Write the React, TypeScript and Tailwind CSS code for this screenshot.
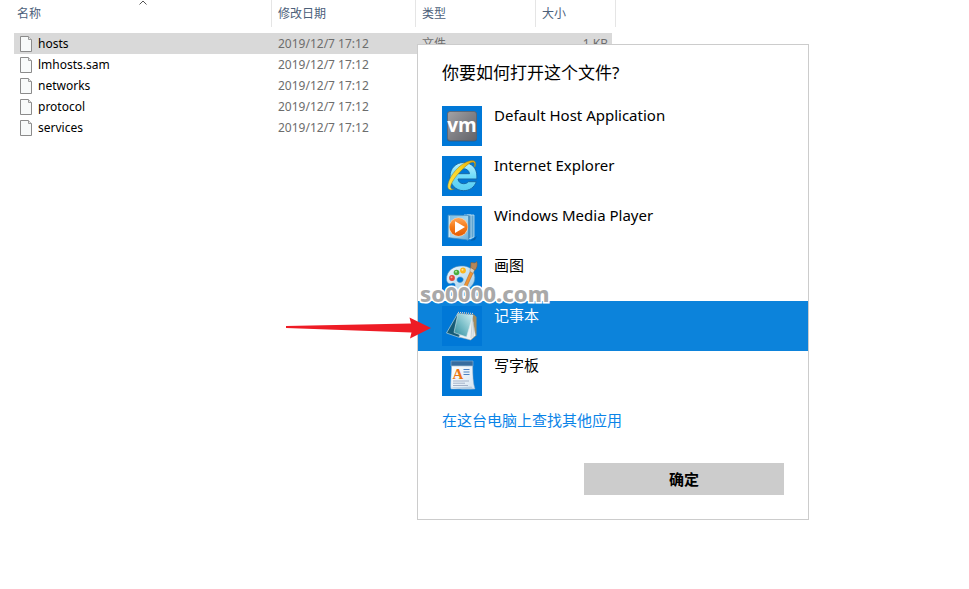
import type { ReactNode } from "react";
import { clsx } from "clsx";

type FileRow = { name: string; modified: string; type?: string; size?: string };

const files: FileRow[] = [
  { name: "hosts", modified: "2019/12/7 17:12", type: "文件", size: "1 KB" },
  { name: "lmhosts.sam", modified: "2019/12/7 17:12" },
  { name: "networks", modified: "2019/12/7 17:12" },
  { name: "protocol", modified: "2019/12/7 17:12" },
  { name: "services", modified: "2019/12/7 17:12" },
];

function FileIcon() {
  return (
    <svg className="h-4 w-3 shrink-0" viewBox="0 0 12 16" fill="none" aria-hidden="true">
      <path d="M.5.5h8l3 3v12H.5z" fill="#f8fafa" stroke="#8b8b8b" />
      <path d="M8.5.5v3h3" fill="#e6e6e6" stroke="#9a9a9a" />
    </svg>
  );
}

function VmIcon() {
  return (
    <svg viewBox="0 0 40 40" className="h-10 w-10" aria-hidden="true">
      <defs>
        <linearGradient id="vm-body" x1="0" y1="0" x2="1" y2="1">
          <stop offset="0" stopColor="#a3a3a6" />
          <stop offset=".5" stopColor="#808085" />
          <stop offset="1" stopColor="#626268" />
        </linearGradient>
      </defs>
      <rect x="5" y="5.5" width="30" height="30" rx="3" fill="#2b5c8e" />
      <rect x="5.500" y="5.500" width="29" height="29" rx="2.500" fill="url(#vm-body)" stroke="#5d6570" strokeWidth=".8" />
      <text x="20" y="26" textAnchor="middle" fontSize="19" fontWeight="700" fill="#fff" fontFamily="Open Sans, sans-serif">
        vm
      </text>
    </svg>
  );
}

function ExplorerIcon() {
  return (
    <svg viewBox="0 0 40 40" className="h-10 w-10" fill="none" aria-hidden="true">
      <defs>
        <linearGradient id="ie-body" x1="0" y1="0" x2="0" y2="1">
          <stop offset="0" stopColor="#b9f1fd" />
          <stop offset=".5" stopColor="#6fdcf9" />
          <stop offset="1" stopColor="#58cdf3" />
        </linearGradient>
        <linearGradient id="ie-ring" x1="0" y1="1" x2="1" y2="0">
          <stop offset="0" stopColor="#ffe04a" />
          <stop offset=".6" stopColor="#fbd21c" />
          <stop offset="1" stopColor="#e5a20a" />
        </linearGradient>
      </defs>
      <path
        d="M21.500 6.500c8 0 13.400 5.700 13.400 13.500v3H16c.4 3 2.600 4.700 5.600 4.700 2.200 0 3.800-.8 4.900-2h7.800c-1.900 5.700-6.700 9-12.700 9C13.700 34.700 8 28.700 8 20.500 8 12.200 14 6.500 21.500 6.500zM16 17.700h11.500c-.5-3-2.700-4.900-5.700-4.900-3.100 0-5.200 1.900-5.800 4.900z"
        fill="url(#ie-body)"
        stroke="#1669a8"
        strokeWidth="1"
        fillRule="evenodd"
      />
      <path
        d="M33.200 10.800c.8-2.600.7-4.600-.4-5.600-3.100-2.700-12.600 1.500-19.300 9.200S4 30.900 6.900 33.300c1.300 1 3.300.7 5.600-.5-1.600.4-2.700.3-3.300-.3-2.100-2 2-9.300 8.300-16.100S29.600 4.800 31.800 6.600c.9.700 1 2.200.3 4.200z"
        fill="url(#ie-ring)"
        stroke="#7c7a33"
        strokeWidth=".5"
      />
    </svg>
  );
}

function MediaPlayerIcon() {
  return (
    <svg viewBox="0 0 40 40" className="h-10 w-10" aria-hidden="true">
      <defs>
        <linearGradient id="wmp-disc" x1="0" y1="0" x2="0" y2="1">
          <stop offset="0" stopColor="#ffa557" />
          <stop offset=".5" stopColor="#f57a17" />
          <stop offset="1" stopColor="#e45c05" />
        </linearGradient>
        <linearGradient id="wmp-case" x1="0" y1="0" x2="1" y2="1">
          <stop offset="0" stopColor="#76bce6" />
          <stop offset=".55" stopColor="#a7d7ef" />
          <stop offset="1" stopColor="#6daed7" />
        </linearGradient>
      </defs>
      <path d="M28 35l7-5-2 4z" fill="#07508f" opacity=".6" />
      <path d="M25 9h7v22l-4 2z" fill="#5fa5d1" stroke="#c0e2f4" strokeWidth=".8" />
      <path d="M22 9h7v23l-4 2z" fill="#4a91c2" stroke="#c0e2f4" strokeWidth=".8" />
      <path d="M6 9l20.500.5V34L6 31.500z" fill="url(#wmp-case)" stroke="#438bbd" strokeWidth=".7" />
      <path d="M7.500 10v21" stroke="#d0eaf6" strokeWidth=".8" />
      <circle cx="16.500" cy="21" r="9.500" fill="#ffd1a5" />
      <circle cx="16.500" cy="21" r="9" fill="url(#wmp-disc)" />
      <path d="M13 15.300L23 21l-10 6z" fill="#fff" />
    </svg>
  );
}

function PaintIcon() {
  return (
    <svg viewBox="0 0 40 40" className="h-10 w-10" aria-hidden="true">
      <defs>
        <linearGradient id="palette" x1="0" y1="0" x2="1" y2="1">
          <stop offset="0" stopColor="#f3f9fd" />
          <stop offset="1" stopColor="#9bcbe9" />
        </linearGradient>
      </defs>
      <path
        d="M22 10C11.500 9 4.500 15 4.500 23c0 3.500 2.500 5.500 5 4.500 3-1.200 4 .5 3.500 3-.5 3 2 5 7 4.500 8-1 13-7 12.800-13.500C32.600 15 28.500 10.700 22 10zm-4 11c2 0 3.200 1 3.200 2.600S19.800 26.500 18 26.500s-3-1.200-3-2.700S16.200 21 18 21z"
        fill="url(#palette)"
        stroke="#4e8fba"
        strokeWidth=".6"
        fillRule="evenodd"
      />
      <circle cx="10" cy="22" r="2.900" fill="#e0483e" />
      <circle cx="14.500" cy="16.500" r="2.800" fill="#4caf3d" />
      <circle cx="21" cy="14.500" r="2.900" fill="#fbb51c" />
      <circle cx="9.500" cy="21.300" r="1" fill="#f7a49d" />
      <circle cx="14" cy="15.800" r="1" fill="#b4e3a8" />
      <circle cx="20.500" cy="13.800" r="1" fill="#ffe39a" />
      <path d="M28.500 15l2.800 1.700-7.300 15.800-3 2.500.5-4z" fill="#ee9434" stroke="#b9641a" strokeWidth=".5" />
      <path d="M28.800 11l4 2.600-1.700 3.700-3.300-2z" fill="#d9d2c4" stroke="#8a7a60" strokeWidth=".4" />
      <path d="M28.500 11.500c.7-2 0-4 .5-5l4 .5 1.800-1.500c1 3.500.2 6.500-1.800 8.700z" fill="#b5875a" stroke="#80582f" strokeWidth=".5" />
    </svg>
  );
}

function NotepadIcon() {
  return (
    <svg viewBox="0 0 40 40" className="h-10 w-10" aria-hidden="true">
      <defs>
        <linearGradient id="note-cover" x1="0" y1="1" x2="1" y2="0">
          <stop offset="0" stopColor="#2d8a9b" />
          <stop offset=".5" stopColor="#7dc0ca" />
          <stop offset="1" stopColor="#d8f3f6" />
        </linearGradient>
      </defs>
      <path d="M31.500 8l3 3v18.500L29 34l-3-1z" fill="#a38b5c" />
      <path d="M16 7L4.500 27l13 4.500z" fill="#155b76" stroke="#bad6dc" strokeWidth=".7" />
      <path d="M30 9l3.500 20.500-5 4.500L17 31z" fill="#eef3f4" stroke="#a4b0b2" strokeWidth=".5" />
      <path d="M30.500 12L29 32M31.500 16l-.5 15" stroke="#a9b8bd" strokeWidth=".6" />
      <path d="M16 7.500l15 1.500-6.500 22-12.500-4.500z" fill="url(#note-cover)" stroke="#d5eaee" strokeWidth=".6" />
      <path d="M16 7l15.500 1.200" stroke="#8a9496" strokeWidth="1.600" strokeDasharray="1 1" />
      <path d="M16 6.300l15.500 1.200" stroke="#d8dbd9" strokeWidth="1" strokeDasharray="1 1" />
    </svg>
  );
}

function WordpadIcon() {
  return (
    <svg viewBox="0 0 40 40" className="h-10 w-10" aria-hidden="true">
      <defs>
        <linearGradient id="word-page" x1="0" y1="0" x2="1" y2="1">
          <stop offset="0" stopColor="#fff" />
          <stop offset="1" stopColor="#d5e4f1" />
        </linearGradient>
      </defs>
      <path d="M9 5h22v5H9z" fill="#386c9e" stroke="#7fa9cf" strokeWidth=".7" />
      <path d="M9.500 10h21.200c0 9 .3 17 2.300 23H9c-1-3 .5-16 .5-23z" fill="url(#word-page)" stroke="#8aa9c5" strokeWidth=".5" />
      <path d="M9 31c5 2.500 15 2.500 24 2-2-.5-3-1.500-3.500-2.500-7 1-14 .8-20.500.5z" fill="#b8cde0" />
      <text x="10.500" y="22.500" fontSize="15" fontWeight="700" fill="#ed7611" fontFamily="Liberation Serif, serif">
        A
      </text>
      <path d="M21.500 13.500h6M21.500 16h6M21.500 18.500h6" stroke="#4f83c4" strokeWidth="1.200" />
      <path d="M11 25h16M11 27.200h12M11 29.500h15" stroke="#a3b1c8" strokeWidth="1" />
    </svg>
  );
}

const apps: { name: string; icon: ReactNode; selected?: boolean }[] = [
  { name: "Default Host Application", icon: <VmIcon /> },
  { name: "Internet Explorer", icon: <ExplorerIcon /> },
  { name: "Windows Media Player", icon: <MediaPlayerIcon /> },
  { name: "画图", icon: <PaintIcon /> },
  { name: "记事本", icon: <NotepadIcon />, selected: true },
  { name: "写字板", icon: <WordpadIcon /> },
];

function FileTable() {
  return (
    <table className="ml-3.5 w-[602px] table-fixed border-separate border-spacing-0 text-left text-xs leading-[21px]">
      <colgroup>
        <col className="w-[258px]" />
        <col className="w-36" />
        <col className="w-[120px]" />
        <col className="w-20" />
      </colgroup>
      <thead className="text-[#4c607a]">
        <tr className="h-[27px]">
          <th className="relative border-r border-[#e5e5e5] pl-[3px] font-normal">
            名称
            <svg className="absolute top-0 left-1/2 h-[5px] w-2 -translate-x-1/2" viewBox="0 0 8 5" fill="none" aria-hidden="true">
              <path d="M.5 4.500L4 1l3.500 3.500" stroke="#555" />
            </svg>
          </th>
          <th className="border-r border-[#e5e5e5] pl-1.5 font-normal">修改日期</th>
          <th className="border-r border-[#e5e5e5] pl-1.5 font-normal">类型</th>
          <th className="border-r border-[#e5e5e5] pl-1.5 font-normal">大小</th>
        </tr>
      </thead>
      <tbody className="text-[#6d6d6d]">
        <tr className="h-1.5" aria-hidden="true">
          <td colSpan={4} />
        </tr>
        {files.map((file, i) => {
          const cell = clsx("h-[21px] p-0 align-top", i === 0 && "bg-[#d9d9d9]");
          return (
            <tr key={file.name}>
              <td className={cell}>
                <span className="flex items-center gap-1.5 pl-1.5 text-black">
                  <FileIcon />
                  {file.name}
                </span>
              </td>
              <td className={cell}>
                <span className="block pl-1.5">{file.modified}</span>
              </td>
              <td className={cell}>
                <span className="block pl-1.5">{file.type}</span>
              </td>
              <td className="h-[21px] p-0 pr-1 align-top">
                <span className={clsx("block h-[21px] pr-1 text-right", i === 0 && "bg-[#d9d9d9]")}>{file.size}</span>
              </td>
            </tr>
          );
        })}
      </tbody>
    </table>
  );
}

function OpenWithDialog() {
  return (
    <section
      role="dialog"
      aria-labelledby="open-with-title"
      className="absolute top-11 left-[417px] w-[392px] border border-[#ccc] bg-white pb-6 text-[15px] leading-[18px] text-black"
    >
      <h1 id="open-with-title" className="px-6 pt-4 text-[17px] leading-6">
        你要如何打开这个文件?
      </h1>
      <ul className="mt-4">
        {apps.map((app) => (
          <li key={app.name}>
            <button
              type="button"
              aria-pressed={!!app.selected}
              className={clsx(
                "flex w-full items-start gap-3 px-6 py-[5px] text-left",
                app.selected && "bg-[#0c83db] text-white",
              )}
            >
              <span className="h-10 w-10 shrink-0 bg-[#0078d7]">{app.icon}</span>
              <span>{app.name}</span>
            </button>
          </li>
        ))}
      </ul>
      <a href="#" className="mx-6 mt-2.5 block text-[#0a84e8]">
        在这台电脑上查找其他应用
      </a>
      <div className="mt-[34px] flex justify-end px-6">
        <button type="button" className="h-8 w-[200px] bg-[#ccc] font-bold">
          确定
        </button>
      </div>
    </section>
  );
}

export default function App() {
  return (
    <main className="relative min-h-screen bg-white font-['Noto_Sans','Noto_Sans_CJK_SC',sans-serif]">
      <FileTable />
      <OpenWithDialog />
      <p className="absolute top-[283px] left-[420px] text-[22px] leading-5 font-extrabold text-[#a9a9a9] [-webkit-text-stroke:3px_white] [paint-order:stroke_fill]">
        so0000.com
      </p>
      <svg className="absolute top-[317px] left-[286px] h-[22px] w-[145px]" viewBox="0 0 145 22" aria-hidden="true">
        <path d="M0 9l125-2.500L123.500.5 145 11l-21 10.500 1.500-6L0 11z" fill="#ee1c25" />
      </svg>
    </main>
  );
}
